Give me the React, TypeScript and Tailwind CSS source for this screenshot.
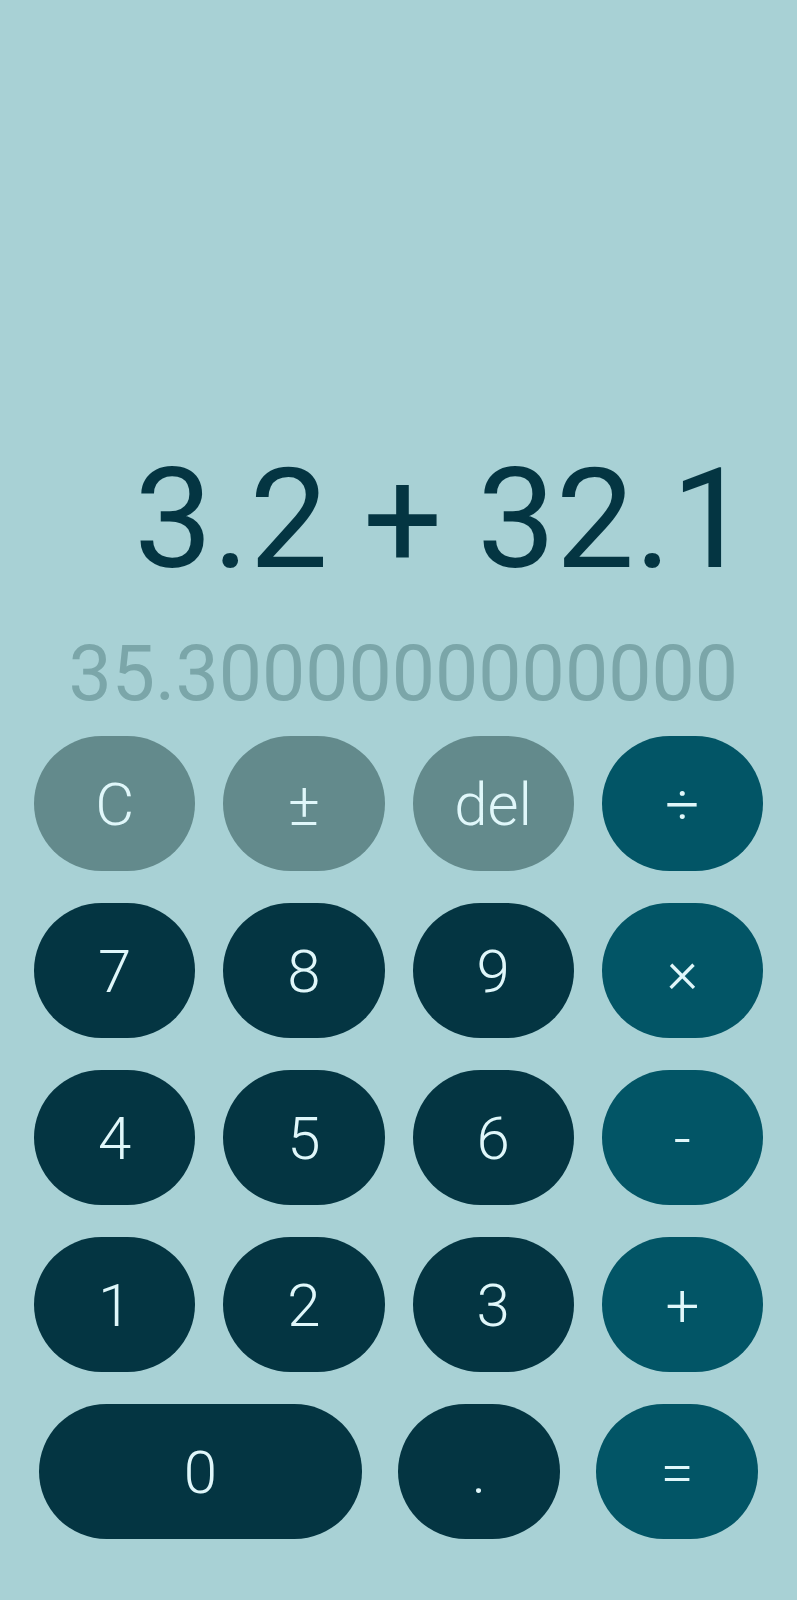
export default function App() {
  const base =
    "flex items-center justify-center rounded-full h-[135px] pt-[3px] text-[60px] font-light leading-none text-[#e0f7fa]";
  const gray = base + " bg-[#638a8c]";
  const dark = base + " bg-[#043542]";
  const op = base + " bg-[#025566]";

  const rows: { label: string; cls: string }[] = [
    { label: "C", cls: gray },
    { label: "±", cls: gray },
    { label: "del", cls: gray },
    { label: "÷", cls: op },
    { label: "7", cls: dark },
    { label: "8", cls: dark },
    { label: "9", cls: dark },
    { label: "×", cls: op },
    { label: "4", cls: dark },
    { label: "5", cls: dark },
    { label: "6", cls: dark },
    { label: "-", cls: op },
    { label: "1", cls: dark },
    { label: "2", cls: dark },
    { label: "3", cls: dark },
    { label: "+", cls: op },
  ];

  return (
    <div className="w-[797px] h-[1600px] bg-[#a8d1d5] font-[Roboto,sans-serif] flex flex-col">
      <div className="pt-[449px] pr-[47px] h-[589px] text-right text-[140px] leading-none text-[#043542] whitespace-pre">
        3.2 + 32.1
      </div>
      <div className="mt-[47px] pr-[59px] text-right text-[77px] leading-none font-normal text-[#7ba6a9]">
        35.3000000000000
      </div>
      <div className="mt-[23px] grid grid-cols-4 gap-x-[28px] gap-y-[32px] px-[34px]">
        {rows.map((b, i) => (
          <div key={i} className={b.cls}>
            {b.label}
          </div>
        ))}
      </div>
      <div className="mt-[32px] flex justify-between px-[39px]">
        <div className={dark + " w-[323px]"}>0</div>
        <div className={dark + " w-[162px]"}>.</div>
        <div className={op + " w-[162px]"}>=</div>
      </div>
    </div>
  );
}
